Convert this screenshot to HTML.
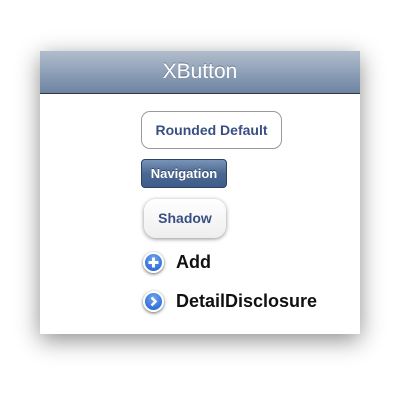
<!DOCTYPE html>
<html><head><style>
body{margin:0;width:400px;height:400px;background:#fff;font-family:"Liberation Sans",sans-serif;position:relative;overflow:hidden}
.win{position:absolute;left:40px;top:51px;width:320px;height:283px;background:#fff;box-shadow:0 6px 22px rgba(0,0,0,.45)}
.hdr{position:absolute;left:0;top:0;width:320px;height:42px;background:linear-gradient(#b1bdcd,#6d84a2);border-bottom:1px solid #2d3642;color:#fff;font-size:21px;text-align:center;line-height:42px;text-shadow:0 -1px 0 rgba(0,0,0,.3)}
.b{position:absolute;box-sizing:border-box;font-weight:bold;text-align:center}
.rd{left:101px;top:60px;width:141px;height:38px;border:1px solid #9a9a9a;border-radius:9px;color:#394f83;font-size:14px;line-height:36px}
.nav{left:101px;top:108px;width:86px;height:29px;border:1px solid #2f4260;border-radius:4px;background:linear-gradient(#7a94b8,#4a6893 50%,#3e5d8a);color:#fff;font-size:13px;line-height:28px;text-shadow:0 -1px 0 rgba(0,0,0,.4)}
.sh{left:104px;top:148px;width:82px;height:39px;border-radius:12px;background:linear-gradient(#fff,#eee);box-shadow:0 1px 4px rgba(0,0,0,.45);color:#394f83;font-size:14px;line-height:39px}
.ic{position:absolute;left:103px;width:21px;height:21px;border-radius:50%;background:radial-gradient(circle at 50% 30%,#6fa4f0,#1b5ed0);border:2px solid #fff;box-shadow:0 1px 3px rgba(0,0,0,.6);box-sizing:border-box;color:#fff;font-weight:bold;text-align:center}
.t{position:absolute;left:136px;font-size:18px;font-weight:bold;color:#111}
</style></head><body>
<div class="win">
<div class="hdr">XButton</div>
<div class="b rd">Rounded Default</div>
<div class="b nav">Navigation</div>
<div class="b sh">Shadow</div>
<div class="ic" style="top:201px"><svg width="17" height="17" viewBox="0 0 17 17"><path d="M8.5 3.5v10M3.5 8.5h10" stroke="#fff" stroke-width="3"/></svg></div>
<div class="t" style="top:201px">Add</div>
<div class="ic" style="top:240px"><svg width="17" height="17" viewBox="0 0 17 17"><path d="M6.5 4.5l4 4-4 4" stroke="#fff" stroke-width="2.6" fill="none"/></svg></div>
<div class="t" style="top:240px">DetailDisclosure</div>
</div>
</body></html>
